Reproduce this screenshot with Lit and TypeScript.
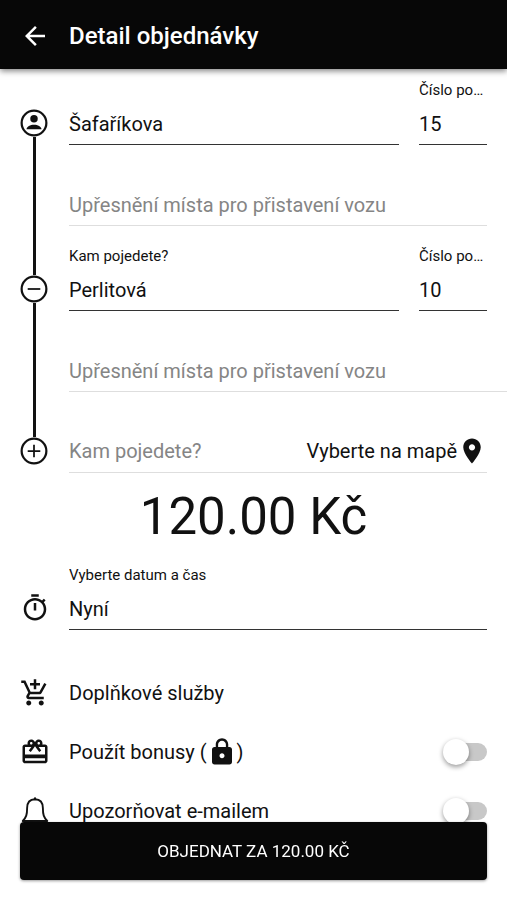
import { LitElement, html, css, svg, nothing } from "lit";
import { customElement, property, state } from "lit/decorators.js";

const icons = {
  back: svg`<path fill="currentColor" d="M20 11H7.83l5.59-5.59L12 4l-8 8 8 8 1.41-1.41L7.83 13H20v-2z"/>`,
  person: svg`<circle cx="12" cy="12" r="10.6" fill="none" stroke="currentColor" stroke-width="1.9"/><circle cx="12" cy="8.4" r="3.2" fill="currentColor"/><path fill="currentColor" d="M5.600 17.400c0-2.400 3.200-3.900 6.400-3.900s6.400 1.500 6.400 3.900z"/>`,
  minus: svg`<circle cx="12" cy="12" r="10.6" fill="none" stroke="currentColor" stroke-width="1.9"/><path d="M6.600 12h10.800" fill="none" stroke="currentColor" stroke-width="1.500"/>`,
  plus: svg`<circle cx="12" cy="12" r="10.6" fill="none" stroke="currentColor" stroke-width="1.9"/><path d="M6.600 12h10.800M12 6.600v10.800" fill="none" stroke="currentColor" stroke-width="1.500"/>`,
  timer: svg`<path fill="currentColor" d="M15 1H9v2h6V1zm-4 13h2V8h-2v6zm8.030-6.610l1.420-1.420c-.43-.51-.9-.99-1.410-1.410l-1.420 1.420C16.070 4.740 14.120 4 12 4c-4.970 0-9 4.030-9 9s4.020 9 9 9 9-4.030 9-9c0-2.120-.74-4.070-1.970-5.610zM12 20c-3.870 0-7-3.130-7-7s3.130-7 7-7 7 3.130 7 7-3.130 7-7 7z"/>`,
  cart: svg`<path fill="currentColor" d="M11 9h2V6h3V4h-3V1h-2v3H8v2h3v3zm-4 9c-1.100 0-1.990.9-1.990 2S5.900 22 7 22s2-.9 2-2-.9-2-2-2zm10 0c-1.100 0-1.990.9-1.990 2s.89 2 1.990 2 2-.9 2-2-.9-2-2-2zm-9.830-3.250l.03-.12.9-1.630h7.450c.75 0 1.410-.41 1.750-1.030l3.860-7.010L19.420 4h-.01l-1.100 2-2.760 5H8.530l-.13-.27L6.160 6l-.95-2-.94-2H1v2h2l3.600 7.590-1.350 2.450c-.16.28-.25.61-.25.96 0 1.100.9 2 2 2h12v-2H7.420c-.13 0-.25-.11-.25-.25z"/>`,
  gift: svg`<path fill="currentColor" d="M20 6h-2.180c.11-.31.18-.65.18-1 0-1.660-1.340-3-3-3-1.050 0-1.960.54-2.500 1.350l-.5.670-.5-.68C10.960 2.540 10.050 2 9 2 7.340 2 6 3.340 6 5c0 .35.07.69.18 1H4c-1.110 0-1.990.89-1.990 2L2 19c0 1.110.89 2 2 2h16c1.110 0 2-.89 2-2V8c0-1.110-.89-2-2-2zm-5-2c.55 0 1 .45 1 1s-.45 1-1 1-1-.45-1-1 .45-1 1-1zM9 4c.55 0 1 .45 1 1s-.45 1-1 1-1-.45-1-1 .45-1 1-1zm11 15H4v-2h16v2zm0-5H4V8h5.080L7 10.830 8.620 12 11 8.760l1-1.360 1 1.360L15.380 12 17 10.830 14.920 8H20v6z"/>`,
  bell: svg`<path fill="none" stroke="currentColor" stroke-width="1.500" stroke-linejoin="round" d="M12 2.600C7.600 2.800 5.700 5.800 5.700 9.600c0 5.400-.7 7.400-3.500 10.400h19.600c-2.800-3-3.500-5-3.500-10.400 0-3.800-1.900-6.800-6.300-7z"/><path fill="none" stroke="currentColor" stroke-width="1.800" stroke-linecap="round" d="M12 2.300v-.4"/><path fill="none" stroke="currentColor" stroke-width="1.500" d="M9.500 20.500c0 1.500 1 2.600 2.500 2.600s2.500-1.100 2.500-2.600"/>`,
  lock: svg`<path fill="currentColor" d="M18 8h-1V6c0-2.760-2.240-5-5-5S7 3.240 7 6v2H6c-1.100 0-2 .9-2 2v10c0 1.100.9 2 2 2h12c1.100 0 2-.9 2-2V10c0-1.100-.9-2-2-2zm-6 9c-1.100 0-2-.9-2-2s.9-2 2-2 2 .9 2 2-.9 2-2 2zm3.100-9H8.900V6c0-1.710 1.390-3.100 3.100-3.100s3.100 1.390 3.100 3.100v2z"/>`,
  pin: svg`<path fill="currentColor" d="M12 2C8.130 2 5 5.130 5 9c0 5.250 7 13 7 13s7-7.750 7-13c0-3.870-3.130-7-7-7zm0 9.500c-1.380 0-2.500-1.120-2.500-2.500s1.120-2.500 2.500-2.500 2.500 1.120 2.500 2.500-1.120 2.500-2.500 2.500z"/>`,
};

type IconName = keyof typeof icons;

@customElement("ride-icon")
export class RideIcon extends LitElement {
  @property() name: IconName = "back";

  static styles = css`
    :host {
      display: block;
      flex: none;
      width: 30px;
      height: 30px;
    }
    .glyph {
      display: block;
      width: 100%;
      height: 100%;
    }
  `;

  render() {
    return html`<svg class="glyph" viewBox="0 0 24 24" aria-hidden="true">${icons[this.name]}</svg>`;
  }
}

interface Stop {
  id: string;
  icon: IconName;
  label: string;
  street: string;
  house: string;
}

@customElement("app-root")
export class AppRoot extends LitElement {
  @state() private stops: Stop[] = [
    { id: "from", icon: "person", label: "", street: "Šafaříkova", house: "15" },
    { id: "to", icon: "minus", label: "Kam pojedete?", street: "Perlitová", house: "10" },
  ];
  @state() private price = "120.00";

  static styles = css`
    :host {
      display: block;
      min-height: 100vh;
      background: #fff;
      color: #111;
      font: 400 20px/24px Roboto, "Noto Sans", sans-serif;
    }
    * {
      box-sizing: border-box;
    }
    input,
    button {
      margin: 0;
      padding: 0;
      border: 0;
      border-radius: 0;
      background: none;
      color: inherit;
      font: inherit;
    }
    input {
      outline: none;
    }
    .bar {
      display: flex;
      align-items: center;
      gap: 19px;
      height: 69px;
      padding: 2px 20px 0;
      background: #070707;
      color: #fff;
      box-shadow: 0 2px 6px rgba(0, 0, 0, 0.5);
    }
    .title {
      margin: 0;
      font-size: 24px;
      font-weight: 500;
      line-height: 28px;
    }
    .back {
      display: block;
    }
    .stops {
      margin: 0;
      padding: 11px 0 0 20px;
      list-style: none;
    }
    .stop {
      display: flex;
      gap: 21px;
    }
    .rail {
      display: flex;
      flex: none;
      flex-direction: column;
      align-items: center;
      width: 28px;
    }
    .lead {
      width: 3px;
      height: 29px;
      background: #111;
    }
    .lead.none {
      background: none;
    }
    .lead.short {
      height: 25px;
    }
    .node {
      width: 28px;
      height: 28px;
    }
    .trail {
      flex: 1;
      width: 3px;
      background: #111;
    }
    .fields {
      flex: 1;
      min-width: 0;
      padding-bottom: 20px;
    }
    .address {
      display: flex;
      gap: 20px;
      margin: 0 20px 36px 0;
    }
    .street {
      flex: 1;
      min-width: 0;
    }
    .house {
      flex: none;
      width: 68px;
    }
    .label {
      display: block;
      height: 20px;
      overflow: hidden;
      font-size: 15px;
      line-height: 20px;
      text-overflow: ellipsis;
      white-space: nowrap;
    }
    .input {
      display: block;
      width: 100%;
      height: 45px;
      padding-top: 4px;
      border-bottom: 1px solid #333;
    }
    .input::placeholder,
    .next::placeholder {
      color: #858585;
      opacity: 1;
    }
    .note {
      border-color: #dedede;
    }
    .note-wrap {
      padding-right: 20px;
    }
    .note-wrap.bleed {
      padding-right: 0;
    }
    .add {
      display: flex;
      flex: 1;
      align-items: center;
      min-width: 0;
      height: 45px;
      margin: 16px 20px 0 0;
      padding-top: 2px;
      border-bottom: 1px solid #dedede;
    }
    .next {
      flex: 1;
      min-width: 0;
    }
    .map {
      display: flex;
      align-items: center;
    }
    .price {
      margin: 0;
      padding: 14px 0 18px;
      font-size: 51px;
      line-height: 60px;
      text-align: center;
    }
    .when,
    .row {
      display: flex;
      gap: 19px;
      padding: 0 20px;
    }
    .when {
      align-items: flex-end;
      margin-bottom: 33px;
    }
    .when-icon {
      margin-bottom: 7px;
    }
    .date {
      flex: 1;
    }
    .row {
      align-items: center;
      height: 59px;
    }
    .text {
      display: flex;
      flex: 1;
      align-items: center;
      text-align: left;
    }
    .switch {
      position: relative;
      width: 41px;
      height: 18px;
      border-radius: 9px;
      background: #c8c8c8;
      appearance: none;
    }
    .switch::before {
      content: "";
      position: absolute;
      top: -4px;
      left: -3px;
      width: 26px;
      height: 26px;
      border-radius: 50%;
      background: #fff;
      box-shadow: 0 2px 5px rgba(0, 0, 0, 0.4);
    }
    .switch:checked::before {
      left: 18px;
    }
    .order {
      position: fixed;
      right: 20px;
      bottom: 20px;
      left: 20px;
      height: 58px;
      border-radius: 4px;
      background: #070707;
      color: #fff;
      font-size: 17px;
      text-transform: uppercase;
      box-shadow: 0 1px 3px rgba(0, 0, 0, 0.4);
    }
  `;

  private renderStop(stop: Stop, index: number) {
    const last = index === this.stops.length - 1;
    return html`
      <li class="stop">
        <div class="rail">
          <span class="lead ${index === 0 ? "none" : ""}"></span>
          <ride-icon class="node" name=${stop.icon}></ride-icon>
          <span class="trail"></span>
        </div>
        <div class="fields">
          <div class="address">
            <div class="street">
              <label class="label" for="street-${stop.id}">${stop.label}</label>
              <input class="input" id="street-${stop.id}" aria-label=${stop.label ? nothing : "Ulice"} .value=${stop.street} />
            </div>
            <div class="house">
              <label class="label" for="house-${stop.id}">Číslo popisné</label>
              <input class="input" id="house-${stop.id}" inputmode="numeric" .value=${stop.house} />
            </div>
          </div>
          <div class="note-wrap ${last ? "bleed" : ""}">
            <input
              class="input note"
              aria-label="Upřesnění místa pro přistavení vozu"
              placeholder="Upřesnění místa pro přistavení vozu"
            />
          </div>
        </div>
      </li>
    `;
  }

  render() {
    return html`
      <header class="bar">
        <button class="back" aria-label="Zpět"><ride-icon name="back"></ride-icon></button>
        <h1 class="title">Detail objednávky</h1>
      </header>
      <main>
        <ol class="stops">
          ${this.stops.map((stop, index) => this.renderStop(stop, index))}
          <li class="stop">
            <div class="rail">
              <span class="lead short"></span>
              <ride-icon class="node" name="plus"></ride-icon>
            </div>
            <div class="add">
              <input class="next" aria-label="Kam pojedete?" placeholder="Kam pojedete?" />
              <button class="map">Vyberte na mapě<ride-icon name="pin"></ride-icon></button>
            </div>
          </li>
        </ol>
        <p class="price">${this.price} Kč</p>
        <div class="when">
          <ride-icon class="when-icon" name="timer"></ride-icon>
          <div class="date">
            <label class="label" for="date">Vyberte datum a čas</label>
            <input class="input" id="date" readonly .value=${"Nyní"} />
          </div>
        </div>
        <div class="row">
          <ride-icon name="cart"></ride-icon>
          <button class="text">Doplňkové služby</button>
        </div>
        <div class="row">
          <ride-icon name="gift"></ride-icon>
          <label class="text" for="bonus">Použít bonusy (<ride-icon name="lock"></ride-icon>)</label>
          <input class="switch" id="bonus" type="checkbox" role="switch" />
        </div>
        <div class="row">
          <ride-icon name="bell"></ride-icon>
          <label class="text" for="email">Upozorňovat e-mailem</label>
          <input class="switch" id="email" type="checkbox" role="switch" />
        </div>
      </main>
      <button class="order">Objednat za ${this.price} Kč</button>
    `;
  }
}
